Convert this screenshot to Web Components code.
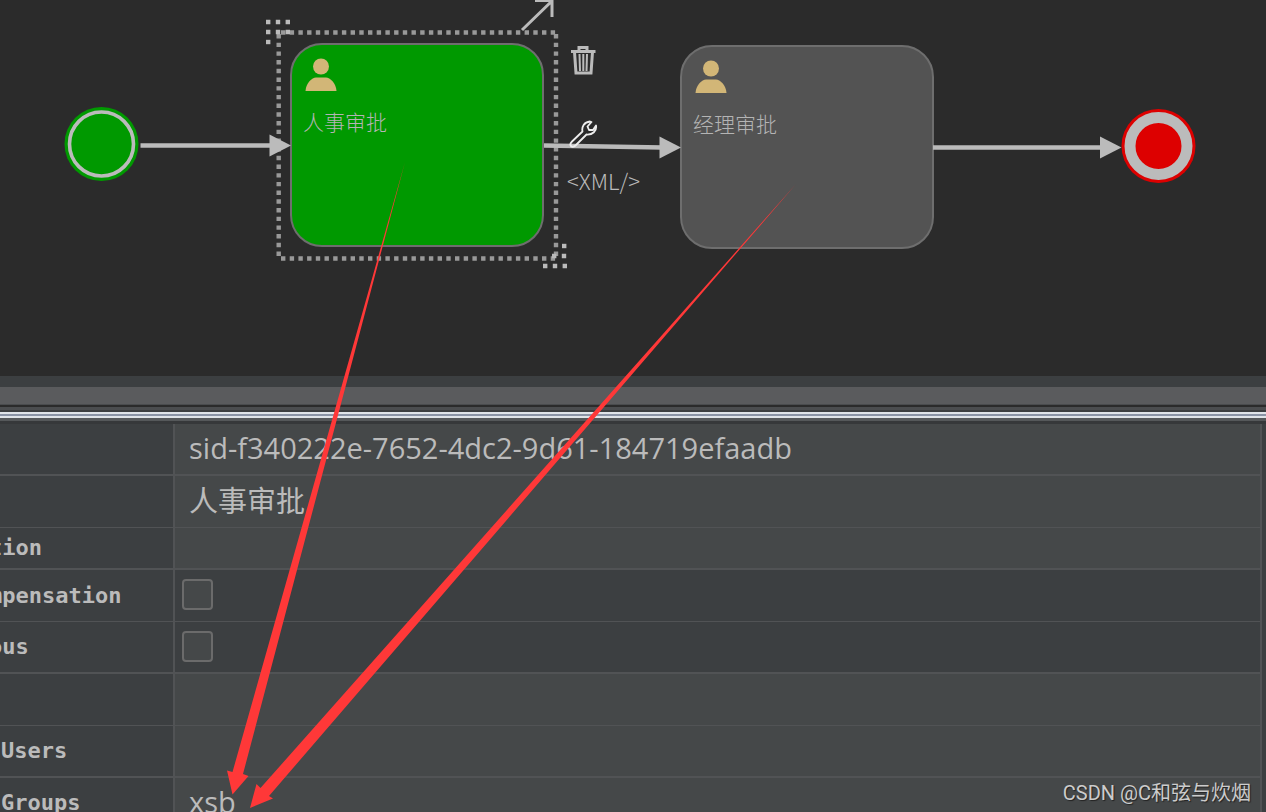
<!DOCTYPE html>
<html lang="zh-CN">
<head>
<meta charset="utf-8">
<title>BPMN Designer</title>
<style>
  html {
    height: 100%;
    background: #3c3f41;
  }
  body {
    margin: 0;
    height: 100%;
    overflow: hidden;
    color: #bbb;
    font-family: "Open Sans", "Noto Sans CJK SC", sans-serif;
  }
</style>
</head>
<body>
<bpmn-designer>
  <bpmn-canvas slot="canvas">
    <flow-task name="人事审批" selected style="left: 290px; top: 43px"></flow-task>
    <flow-task name="经理审批" style="left: 680px; top: 45px"></flow-task>
    <task-tools style="left: 564px; top: 42px"></task-tools>
  </bpmn-canvas>
  <pane-splitter slot="splitter"></pane-splitter>
  <property-table slot="properties"></property-table>
  <arrow-notes slot="notes"></arrow-notes>
  <water-mark slot="notes">CSDN @C和弦与炊烟</water-mark>
</bpmn-designer>

<script>
class BpmnDesigner extends HTMLElement {

  css = `<style>
    :host {
      display: flex;
      flex-direction: column;
      position: relative;
      height: 100%;
      overflow: hidden;
    }
  </style>`;

  constructor() {
    super();
    this.attachShadow({ mode: 'open' }).innerHTML = `
      ${this.css}
      <slot name="canvas"></slot>
      <slot name="splitter"></slot>
      <slot name="properties"></slot>
      <slot name="notes"></slot>
    `;
  }
}

class BpmnCanvas extends HTMLElement {

  css = `<style>
    :host {
      display: block;
      position: relative;
      flex: none;
      height: 376px;
      overflow: hidden;
      background: #2b2b2b;
    }
    svg {
      position: absolute;
      left: 0;
      top: 0;
      overflow: visible;
      pointer-events: none;
    }
  </style>`;

  constructor() {
    super();
    this.attachShadow({ mode: 'open' }).innerHTML = `
      ${this.css}
      <slot></slot>
      <svg width="1266" height="376">
        <circle cx="101.5" cy="144" r="37" fill="#090"/>
        <circle cx="101.5" cy="144" r="32" fill="none" stroke="#bbb" stroke-width="3.6"/>
        <circle cx="1158.500" cy="146" r="37" fill="#d00"/>
        <circle cx="1158.500" cy="146" r="28.500" fill="none" stroke="#bbb" stroke-width="11"/>

        <!-- selection frame and its corner grips -->
        <g fill="none" stroke="#999" stroke-width="4.4" stroke-dasharray="4.4 4.3">
          <path d="M281 32.500H556"/>
          <path d="M278.700 34V258"/>
          <path d="M556 34V258"/>
          <path d="M281 258.500H556"/>
        </g>
        <g fill="none" stroke="#bbb" stroke-width="4.4" stroke-dasharray="4.4 5.4">
          <path d="M266 22H291"/>
          <path d="M266 32H291"/>
          <path d="M266 42H271"/>
          <path d="M562 246H567"/>
          <path d="M552 256H568"/>
          <path d="M543 266H568"/>
        </g>

        <g stroke="#bbb" stroke-width="4.4" fill="none">
          <path d="M140.500 145.500H272"/>
          <path d="M544 145.500L662 147.500"/>
          <path d="M933 147.500H1102"/>
        </g>
        <g fill="#bbb">
          <path d="M269.500 134.500V156.500L291 145.500Z"/>
          <path d="M659.500 136.500V158.500L681 147.500Z"/>
          <path d="M1100 136.500V158.500L1121.500 147.500Z"/>
        </g>
        <path d="M522 30L552 1M535 0.500H552V17" fill="none" stroke="#bbb" stroke-width="3"/>
      </svg>
    `;
  }
}

class FlowTask extends HTMLElement {

  css = `<style>
    :host {
      display: flex;
      flex-direction: column;
      gap: 15px;
      box-sizing: border-box;
      position: absolute;
      width: 254px;
      height: 204px;
      padding: 12px 11px;
      border: 2px solid #6e6e6e;
      border-radius: 32px;
      background: #535353;
      color: #b4b4b4;
      font: 300 21px/26px "Noto Sans CJK SC", sans-serif;
    }
    :host([selected]) {
      background: #090;
    }
    svg {
      display: block;
      margin-left: 2px;
    }
  </style>`;

  constructor() {
    super();
    this.attachShadow({ mode: 'open' }).innerHTML = `
      ${this.css}
      <svg width="32" height="36">
        <circle cx="16" cy="9.5" r="8" fill="#d2b677"/>
        <path d="M.5 34C1 26 7 20.500 11 20.500H21C25 20.500 31 26 31.500 34Z" fill="#d2b677"/>
      </svg>
      <span></span>
    `;
  }

  connectedCallback() {
    this.shadowRoot.querySelector('span').textContent = this.getAttribute('name');
  }
}

class TaskTools extends HTMLElement {

  css = `<style>
    :host {
      display: flex;
      flex-direction: column;
      align-items: flex-start;
      gap: 18px;
      position: absolute;
      z-index: 1;
    }
    button {
      display: block;
      padding: 0 3px;
      border: 0;
      background: none;
      color: #bbb;
      font: 300 22px/28px "Noto Sans CJK SC", sans-serif;
    }
    svg {
      display: block;
    }
    .delete {
      margin-bottom: 20px;
    }
  </style>`;

  constructor() {
    super();
    this.attachShadow({ mode: 'open' }).innerHTML = `
      ${this.css}
      <button class="delete" aria-label="Delete">
        <svg width="32" height="36" fill="none" stroke="#bbb" stroke-width="3">
          <path d="M4 9.500H28.500M12 8V5.500H20V8M7.500 10L9 31H24L25.500 10"/>
          <path d="M12.500 12L13 29M16.300 12V29M20 12L19.500 29" stroke-width="2"/>
        </svg>
      </button>
      <button aria-label="Configure">
        <svg width="32" height="32" fill="none" stroke="#eee" stroke-width="1.8" stroke-linejoin="round">
          <path d="M4 30C2.500 28.500 3.500 27 5 25.500L15.500 15.500C14.500 11 17 6 23 5.500L24.500 6L20.500 10.500L22 14L26 14L29 9.500C30 15 25.500 19 19.500 18.500L9 29C7.500 30.500 5.500 31.500 4 30Z"/>
        </svg>
      </button>
      <button>&lt;XML/&gt;</button>
    `;
  }
}

class PaneSplitter extends HTMLElement {

  css = `<style>
    :host {
      display: block;
      flex: none;
      height: 48px;
      background: linear-gradient(
        #3c3f41 0 11px, #5a5b5d 11px 28px, #4a4c4e 28px 29px,
        #2b2b2b 29px 31px, #4b4d4f 31px 34px, #3b3d3f 34px 36px,
        #dfe3e8 36px 38px, #8a93a5 38px 40px, #dfe3e8 40px 42px,
        #55585a 42px 45px, #36383a 45px 48px
      );
    }
  </style>`;

  constructor() {
    super();
    this.attachShadow({ mode: 'open' }).innerHTML = this.css;
  }
}

class PropertyTable extends HTMLElement {

  css = `<style>
    :host {
      display: block;
      flex: 1;
      min-height: 0;
      overflow: hidden;
      padding-right: 4px;
    }
    table {
      width: 100%;
      border-collapse: separate;
      border-spacing: 0;
      table-layout: fixed;
    }
    th, td {
      box-sizing: border-box;
      padding: 0;
      height: 52px;
      border-right: 2px solid #515355;
      border-bottom: 2px solid #515355;
      text-align: left;
      white-space: nowrap;
    }
    th {
      width: 175px;
      text-indent: -11px;
      overflow: hidden;
      font: bold 22px/28px "DejaVu Sans Mono", monospace;
    }
    td {
      padding: 0 0 2px 14px;
      background: #454849;
      font-size: 29px;
      line-height: 36px;
    }
    .short th, .short td {
      height: 42px;
    }
    .check td {
      padding-left: 7px;
      background: none;
    }
    .thin th, .thin td {
      border-bottom-width: 1px;
    }
    .word th {
      text-indent: 1px;
    }
    input {
      display: block;
      appearance: none;
      box-sizing: border-box;
      width: 31px;
      height: 31px;
      margin: 0;
      border: 2px solid #6b6b6b;
      border-radius: 4px;
      background: #454849;
    }
  </style>`;

  rows = [
    { value: 'sid-f340222e-7652-4dc2-9d61-184719efaadb' },
    { value: '人事审批', kind: 'thin' },
    { label: 'tion', kind: 'short' },
    { label: 'mpensation', id: 'compensation', kind: 'check thin' },
    { label: 'ous', id: 'async', kind: 'check' },
    { kind: 'thin' },
    { label: 'Users', kind: 'word' },
    { label: 'Groups', value: 'xsb', kind: 'word' },
  ];

  constructor() {
    super();
    this.attachShadow({ mode: 'open' }).innerHTML = `
      ${this.css}
      <table>${this.rows.map((row) => this.#createRow(row)).join('')}</table>
    `;
  }

  #createRow({ label = '', value = '', id, kind = '' }) {
    const head = id ? `<label for="${id}">${label}</label>` : label;
    const cell = id ? `<input type="checkbox" id="${id}">` : value;
    return `<tr class="${kind}"><th scope="row">${head}</th><td>${cell}</td></tr>`;
  }
}

class ArrowNotes extends HTMLElement {

  css = `<style>
    :host {
      display: block;
      position: absolute;
      left: 0;
      top: 0;
      z-index: 2;
      pointer-events: none;
    }
    svg {
      display: block;
    }
  </style>`;

  constructor() {
    super();
    this.attachShadow({ mode: 'open' }).innerHTML = `
      ${this.css}
      <svg width="1266" height="812" fill="#ff3838">
        <path d="M405 162L243 774L248.500 776L232.500 794.500L227 770.500L232.500 772Z"/>
        <path d="M796 184L269 796L273 798.500L250 808L256.500 784L260.500 788Z"/>
      </svg>
    `;
  }
}

class WaterMark extends HTMLElement {

  css = `<style>
    :host {
      display: block;
      position: absolute;
      right: 15px;
      bottom: 5px;
      z-index: 3;
      color: #ccc;
      font: 20px/28px Roboto, "Noto Sans CJK SC", sans-serif;
      text-shadow: 1px 1px 1px #222;
    }
  </style>`;

  constructor() {
    super();
    this.attachShadow({ mode: 'open' }).innerHTML = `${this.css}<slot></slot>`;
  }
}

customElements.define('bpmn-canvas', BpmnCanvas);
customElements.define('flow-task', FlowTask);
customElements.define('task-tools', TaskTools);
customElements.define('pane-splitter', PaneSplitter);
customElements.define('property-table', PropertyTable);
customElements.define('arrow-notes', ArrowNotes);
customElements.define('water-mark', WaterMark);
customElements.define('bpmn-designer', BpmnDesigner);
</script>
</body>
</html>
